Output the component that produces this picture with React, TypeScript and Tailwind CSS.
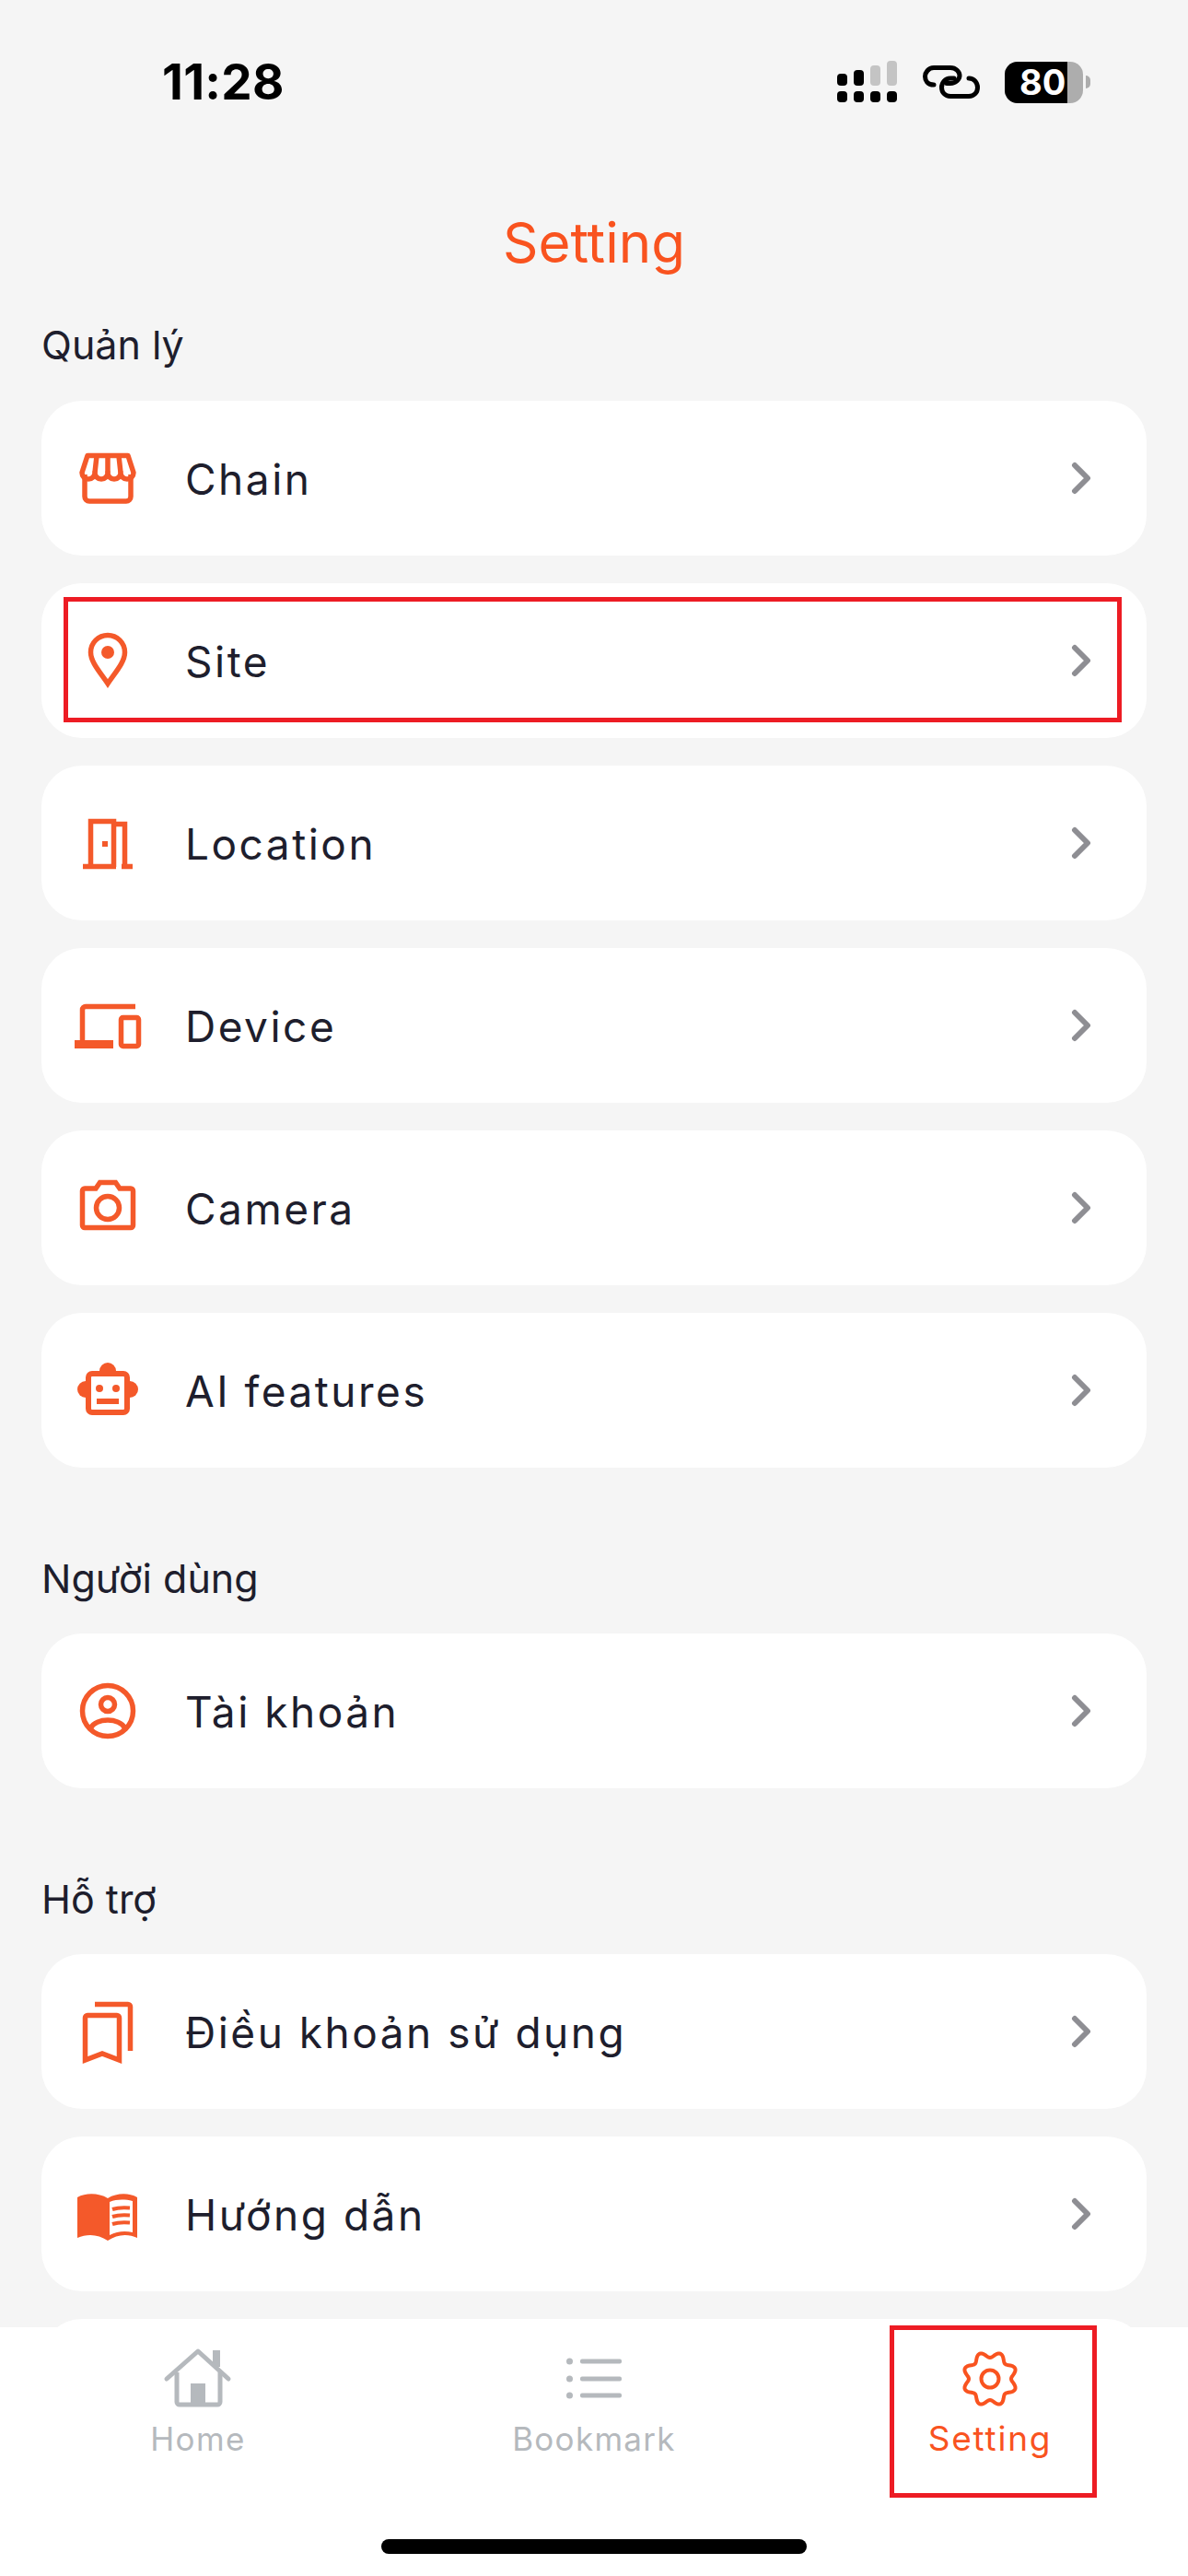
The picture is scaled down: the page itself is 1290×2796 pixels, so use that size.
import type { ReactNode } from "react";

const orange = "#f4592a";

function Icon({ children }: { children: ReactNode }) {
  return (
    <svg
      viewBox="0 0 80 80"
      className="w-20 h-20 shrink-0"
      fill="none"
      stroke={orange}
      strokeWidth={5.5}
    >
      {children}
    </svg>
  );
}

const ChainIcon = () => (
  <Icon>
    <path d="M15 36V60a5 5 0 0 0 5 5H60a5 5 0 0 0 5-5V36" />
    <path d="M18 15.500H62L68 34a7 7 0 0 1-14 0 7 7 0 0 1-14 0 7 7 0 0 1-14 0 7 7 0 0 1-14 0Z" strokeLinejoin="round" />
    <path d="M26 34L28 16M40 34V16M54 34L52 16" />
  </Icon>
);

const SiteIcon = () => (
  <Icon>
    <path d="M40 65C32 53 21.500 42 21.500 31A18.500 18.500 0 0 1 58.500 31C58.500 42 48 53 40 65Z" />
    <circle cx="40" cy="31" r="7" fill={orange} stroke="none" />
  </Icon>
);

const LocationIcon = () => (
  <Icon>
    <path d="M21.500 66V16.500H46.500V66" />
    <path d="M46.500 19.500H58.500V66" />
    <path d="M13 65.500H49M55 65.500H67" />
    <rect x="34" y="38" width="6" height="6" fill={orange} stroke="none" />
  </Icon>
);

const DeviceIcon = () => (
  <Icon>
    <path d="M70 19.500H16a3.500 3.500 0 0 0-3.500 3.500V60" />
    <path d="M4 60.500H46" strokeWidth={9} />
    <rect x="54.500" y="31.500" width="19" height="31" rx="2" />
  </Icon>
);

const CameraIcon = () => (
  <Icon>
    <path d="M15 19H27L31.500 12.500H48.500L53 19H65a2.500 2.500 0 0 1 2.500 2.500V59a2.500 2.500 0 0 1-2.500 2.500H15a2.500 2.500 0 0 1-2.500-2.500V21.500A2.500 2.500 0 0 1 15 19Z" />
    <circle cx="40" cy="40" r="12.500" />
  </Icon>
);

const RobotIcon = () => (
  <Icon>
    <circle cx="40" cy="19" r="9" fill={orange} stroke="none" />
    <circle cx="16" cy="39" r="9" fill={orange} stroke="none" />
    <circle cx="64" cy="39" r="9" fill={orange} stroke="none" />
    <rect x="19" y="22" width="42" height="42" rx="4" fill="#fff" strokeWidth={6} />
    <circle cx="31" cy="38" r="4" fill={orange} stroke="none" />
    <circle cx="49" cy="38" r="4" fill={orange} stroke="none" />
    <rect x="28" y="49" width="24" height="6" fill={orange} stroke="none" />
  </Icon>
);

const AccountIcon = () => (
  <Icon>
    <circle cx="40" cy="40" r="27.500" />
    <circle cx="40" cy="33" r="7.500" />
    <path d="M21 59C28 47 52 47 59 59" />
  </Icon>
);

const TermsIcon = () => (
  <Icon>
    <path d="M26 10.500H62a2.500 2.500 0 0 1 2.500 2.500V61" />
    <path d="M15.500 71V25a2.500 2.500 0 0 1 2.500-2.500H50a2.500 2.500 0 0 1 2.500 2.500V71L34 64Z" />
  </Icon>
);

const GuideIcon = () => (
  <Icon>
    <path d="M7 22C16 17 30 17 40 23C50 17 63 17 72 22V66C62 61 50 62 40 69C30 62 18 61 7 66Z" fill={orange} stroke="none" />
    <path d="M42 27C50 24 58 24 67 26V60C58 58 50 59 42 63Z" fill="#fff" stroke="none" />
    <path d="M45 35C51 33 58 33 64 33.500M45 43C51 41 58 41 64 41.500M45 51C51 49 58 49 64 49.500" strokeWidth={4} />
  </Icon>
);

function Chevron() {
  return (
    <svg viewBox="0 0 24 36" className="w-6 h-9 shrink-0" fill="none">
      <path d="M5 4L19 18L5 32" stroke="#8e8e93" strokeWidth={6} strokeLinecap="round" strokeLinejoin="round" />
    </svg>
  );
}

function Row({ icon, label, children }: { icon: ReactNode; label: string; children?: ReactNode }) {
  return (
    <div className="relative flex items-center shrink-0 h-[168px] bg-white rounded-[44px] pl-[32px] pr-[59px]">
      {icon}
      <span className="ml-[44px] pt-[2px] flex-1 text-[46px] leading-none tracking-[2.5px] text-[#1e1e2d]">{label}</span>
      <Chevron />
      {children}
    </div>
  );
}

function SectionLabel({ children, className }: { children: ReactNode; className: string }) {
  return <div className={`text-[43px] leading-[50px] text-[#1e1e2d] ${className}`}>{children}</div>;
}

function StatusBar() {
  return (
    <div className="flex items-center justify-between h-[176px] pl-[176px] pr-[106px] pt-[2px]">
      <span className="text-[53px] font-bold leading-none tracking-[0.3px] text-black">11:28</span>
      <div className="flex items-center gap-[27px]">
        <svg viewBox="0 0 66 46" className="w-[66px] h-[46px]">
          <rect x="0" y="14" width="11" height="13" rx="4" fill="#000" />
          <rect x="18" y="10" width="11" height="17" rx="4" fill="#000" />
          <rect x="36" y="5" width="11" height="22" rx="4" fill="#c4c4c4" />
          <rect x="54" y="0" width="11" height="27" rx="4" fill="#c4c4c4" />
          <rect x="0" y="33" width="11" height="12" rx="4" fill="#000" />
          <rect x="18" y="33" width="11" height="12" rx="4" fill="#000" />
          <rect x="36" y="33" width="11" height="12" rx="4" fill="#000" />
          <rect x="54" y="33" width="11" height="12" rx="4" fill="#000" />
        </svg>
        <svg viewBox="0 0 62 36" className="w-[62px] h-[36px]" fill="none" stroke="#000" strokeWidth={5}>
          <path d="M12 21C5 21 2.500 16 2.500 12S6 2.500 12 2.500H30C36 2.500 40 7 40 11S36 19.500 30 19.500H26" strokeLinecap="round" />
          <path d="M50 14C56 14 59.500 19 59.500 24S56 33.500 50 33.500H30C24 33.500 20.500 29 20.500 24S24 14 30 14H34" strokeLinecap="round" />
        </svg>
        <div className="flex items-center">
          <div className="relative w-[85px] h-[45px] rounded-[14px] overflow-hidden bg-[#adadad]">
            <div className="absolute inset-y-0 left-0 w-[68px] bg-black" />
            <span className="absolute left-[16px] top-0 text-[38px] leading-[45px] font-bold text-white">80</span>
          </div>
          <div className="w-[5px] h-[14px] ml-[3px] rounded-r-full bg-[#adadad]" />
        </div>
      </div>
    </div>
  );
}

// scalloped outline with 8 lobes, dip at the top centre
function gearPath(cx: number, cy: number) {
  const pts: string[] = [];
  for (let i = 0; i < 160; i++) {
    const a = (i / 160) * Math.PI * 2;
    const r = 26.25 - 3.25 * Math.cos(8 * a);
    pts.push(`${(cx + r * Math.sin(a)).toFixed(2)} ${(cy - r * Math.cos(a)).toFixed(2)}`);
  }
  return `M${pts.join("L")}Z`;
}

function TabBar() {
  return (
    <div className="relative shrink-0 h-[270px] bg-white">
      <div className="grid grid-cols-3 pt-[19px]">
        <div className="flex flex-col items-center">
          <svg viewBox="0 0 80 80" className="w-20 h-20" fill="none" stroke="#b5b9bd" strokeWidth={5}>
            <path d="M60 24V6" strokeWidth={8} />
            <path d="M6 37L40 7L73 37" strokeLinecap="round" strokeLinejoin="round" />
            <path d="M17 30V62a3 3 0 0 0 3 3H61a3 3 0 0 0 3-3V30" />
            <rect x="32" y="42" width="16" height="23" fill="#b5b9bd" stroke="none" />
          </svg>
          <span className="text-[35px] leading-[44px] tracking-[1.4px] text-[#b5b9bd]">Home</span>
        </div>
        <div className="flex flex-col items-center">
          <svg viewBox="0 0 80 80" className="w-20 h-20" fill="#b5b9bd">
            <rect x="10" y="14.500" width="7" height="7" rx="3.500" />
            <rect x="10" y="33.500" width="7" height="7" rx="3.500" />
            <rect x="10" y="51.500" width="7" height="7" rx="3.500" />
            <rect x="25" y="15.500" width="45" height="5" rx="2" />
            <rect x="25" y="34.500" width="45" height="5" rx="2" />
            <rect x="25" y="52.500" width="45" height="5" rx="2" />
          </svg>
          <span className="text-[35px] leading-[44px] tracking-[1.3px] text-[#b5b9bd]">Bookmark</span>
        </div>
        <div className="flex flex-col items-center">
          <svg viewBox="0 0 80 80" className="w-20 h-20" fill="none" stroke="#f9531f" strokeWidth={4}>
            <path d={gearPath(40, 37)} strokeLinejoin="round" />
            <circle cx="40" cy="37" r="9.500" />
          </svg>
          <span className="text-[37px] leading-[44px] tracking-[1.8px] text-[#f9531f]">Setting</span>
        </div>
      </div>
      <div className="absolute left-[966px] top-[-2px] w-[225px] h-[187px] border-[5px] border-[#ed1c24]" />
      <div className="absolute left-[414px] bottom-[24px] w-[462px] h-[16px] rounded-full bg-black" />
    </div>
  );
}

export default function App() {
  return (
    <div className="flex flex-col w-[1290px] h-[2796px] overflow-hidden bg-[#f5f5f5] font-['Inter',sans-serif]">
      <StatusBar />
      <div className="flex-1 min-h-0 overflow-hidden px-[45px] pt-[49px]">
        <h1 className="text-center text-[60px] leading-[76px] font-normal text-[#f9531f]">Setting</h1>
        <SectionLabel className="mt-[48px] mb-[36px]">Quản lý</SectionLabel>
        <div className="flex flex-col gap-[30px]">
          <Row icon={<ChainIcon />} label="Chain" />
          <Row icon={<SiteIcon />} label="Site">
            <div className="absolute left-[24px] top-[15px] w-[1149px] h-[136px] border-[5px] border-[#ed1c24]" />
          </Row>
          <Row icon={<LocationIcon />} label="Location" />
          <Row icon={<DeviceIcon />} label="Device" />
          <Row icon={<CameraIcon />} label="Camera" />
          <Row icon={<RobotIcon />} label="AI features" />
        </div>
        <SectionLabel className="mt-[95px] mb-[35px]">Người dùng</SectionLabel>
        <Row icon={<AccountIcon />} label="Tài khoản" />
        <SectionLabel className="mt-[95px] mb-[35px]">Hỗ trợ</SectionLabel>
        <div className="flex flex-col gap-[30px]">
          <Row icon={<TermsIcon />} label="Điều khoản sử dụng" />
          <Row icon={<GuideIcon />} label="Hướng dẫn" />
          <div className="h-[168px] bg-white rounded-[44px]" />
        </div>
      </div>
      <TabBar />
    </div>
  );
}
